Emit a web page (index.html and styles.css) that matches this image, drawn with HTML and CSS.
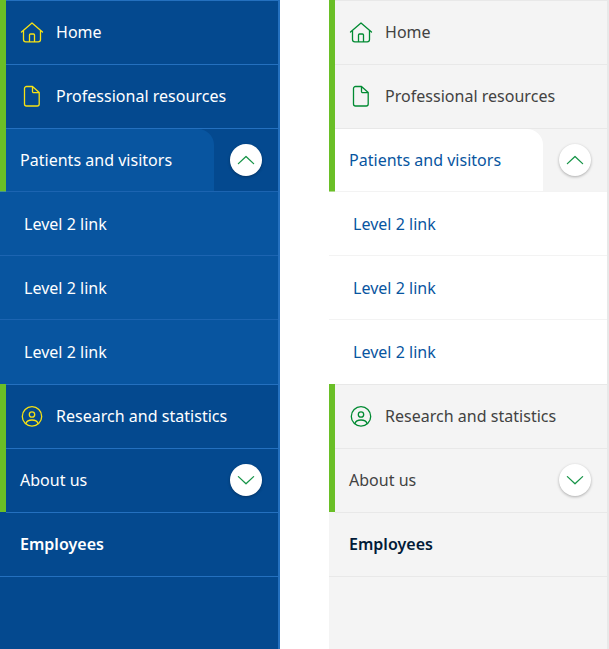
FILE: index.html
```html
<!DOCTYPE html>
<html lang="en">
<head>
<meta charset="utf-8">
<title>Navigation</title>
<link rel="stylesheet" href="styles.css">
</head>
<body>
<svg width="0" height="0" class="defs" aria-hidden="true">
  <symbol id="home" viewBox="0 0 24 24"><path d="M1.500 12 12 3l10.500 9M3.500 10.500V19.500a2.300 2.300 0 0 0 2.300 2.300h12.400a2.300 2.300 0 0 0 2.300-2.300v-9M9.500 21.600v-6.600a1 1 0 0 1 1-1h3a1 1 0 0 1 1 1v6.600"/></symbol>
  <symbol id="file" viewBox="0 0 24 24"><path d="M12.500 2.500H6.500a2 2 0 0 0-2 2v15.500a2 2 0 0 0 2 2h10.700a2 2 0 0 0 2-2V8.500zM12.500 2.500v5a1.200 1.200 0 0 0 1.200 1.200h5.500"/></symbol>
  <symbol id="user" viewBox="0 0 24 24"><circle cx="12" cy="12.400" r="9.700"/><circle cx="12" cy="10.500" r="2.700"/><path d="M5.900 19.600c.7-2.300 3-3.600 6.100-3.600s5.400 1.300 6.100 3.600"/></symbol>
  <symbol id="up" viewBox="0 0 32 32"><path d="m8.400 19.600 7.600-7.100 7.600 7.100"/></symbol>
  <symbol id="down" viewBox="0 0 32 32"><path d="m8.400 12.600 7.600 7.100 7.600-7.100"/></symbol>
</svg>
<main class="page">
  <nav class="menu dark">
    <a class="item"><svg class="icon"><use href="#home"/></svg>Home</a>
    <a class="item"><svg class="icon"><use href="#file"/></svg>Professional resources</a>
    <div class="item open"><a class="tab">Patients and visitors</a><button class="toggle" aria-label="Collapse"><svg><use href="#up"/></svg></button></div>
    <div class="sub"><a>Level 2 link</a><a>Level 2 link</a><a>Level 2 link</a></div>
    <a class="item"><svg class="icon"><use href="#user"/></svg>Research and statistics</a>
    <div class="item">About us<button class="toggle" aria-label="Expand"><svg><use href="#down"/></svg></button></div>
    <a class="item plain">Employees</a>
  </nav>
  <nav class="menu light">
    <a class="item"><svg class="icon"><use href="#home"/></svg>Home</a>
    <a class="item"><svg class="icon"><use href="#file"/></svg>Professional resources</a>
    <div class="item open"><a class="tab">Patients and visitors</a><button class="toggle" aria-label="Collapse"><svg><use href="#up"/></svg></button></div>
    <div class="sub"><a>Level 2 link</a><a>Level 2 link</a><a>Level 2 link</a></div>
    <a class="item"><svg class="icon"><use href="#user"/></svg>Research and statistics</a>
    <div class="item">About us<button class="toggle" aria-label="Expand"><svg><use href="#down"/></svg></button></div>
    <a class="item plain">Employees</a>
  </nav>
</main>
</body>
</html>
```
FILE: styles.css
```css
* { box-sizing: border-box; }
body { margin: 0; background: #fff; font: 16px/24px "Noto Sans", sans-serif; letter-spacing: .02px; overflow: hidden; }
.defs { display: none; }
.page { display: flex; justify-content: space-between; height: 649px; }
.menu { width: 280px; background: var(--bg); color: var(--text); border-right: 2px solid var(--edge); }
.dark { --bg: #04498f; --panel: #0855a0; --text: #fff; --link: #fff; --strong: #fff; --line: #2470bf; --edge: #2470bf; --subline: #1c64b1; --cap: #46978c; --icon: #f7e214; --shadow: rgba(0,0,0,.3); }
.light { --bg: #f4f4f4; --panel: #fff; --text: #424242; --link: #0855a0; --strong: #021b38; --line: #e8e8e8; --edge: #e8e8e8; --subline: #f3f3f3; --cap: #afdb8d; --icon: #008a32; --shadow: rgba(0,0,0,.3); }

.item { display: flex; align-items: center; height: 64px; padding: 0 16px 0 14px; box-shadow: inset 0 1px var(--line); margin-left: 6px; position: relative; }
.item::before { content: ""; position: absolute; left: -6px; top: 0; width: 6px; height: 64px; background: #6abf27; }
.plain { font-weight: 600; color: var(--strong); }
.plain::before { left: -6px; right: 0; top: 64px; width: auto; height: 1px; background: var(--line); }
.icon { width: 24px; height: 24px; margin-right: 12px; fill: none; stroke: var(--icon); stroke-width: 1.3; stroke-linecap: round; stroke-linejoin: round; }

.open { padding-left: 0; }
.open::before { background: linear-gradient(#6abf27 63px, var(--cap) 63px); }
.open::after { content: ""; position: absolute; left: 0; right: 0; bottom: 0; height: 1px; background: var(--subline); }
.tab { display: flex; align-items: center; width: 208px; height: 63px; margin-top: 1px; padding: 0 0 1px 14px; background: var(--panel); color: var(--link); border-radius: 0 16px 0 0; }
.toggle { width: 32px; height: 32px; margin-left: auto; padding: 0; border: 0; border-radius: 50%; background: #fff; box-shadow: 0 1px 3px var(--shadow); }
.toggle svg { display: block; width: 32px; height: 32px; fill: none; stroke: #169447; stroke-width: 1.3; stroke-linecap: round; stroke-linejoin: round; }

.sub { background: var(--panel); color: var(--link); }
.sub a { display: flex; align-items: center; height: 64px; padding-left: 24px; box-shadow: inset 0 -1px var(--subline); }
.sub a:last-child { box-shadow: none; }
```
